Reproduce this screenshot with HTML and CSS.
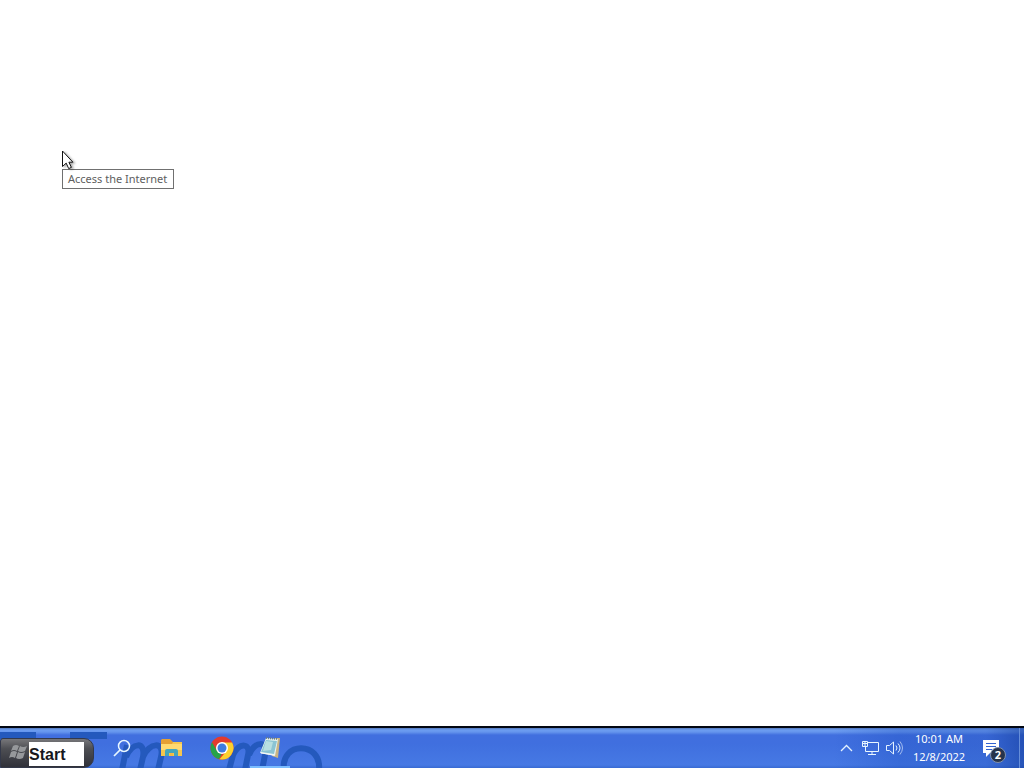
FILE: index.html
```
<!DOCTYPE html>
<html lang="en">
<head>
<meta charset="utf-8">
<meta name="viewport" content="width=device-width, initial-scale=1">
<title>Desktop</title>
<link rel="stylesheet" href="styles.css">
</head>
<body>
<main class="desktop">
  <div class="pointer">
    <svg class="cursor" viewBox="0 0 15 20" aria-hidden="true"><path d="M.5 1v15.500l3.700-3.400 2.500 5.500 2.700-1.200-2.500-5.200h4z" fill="#fff" stroke="#111" stroke-width="1"/></svg>
    <div class="tooltip" role="tooltip">Access the Internet</div>
  </div>
</main>
<footer class="taskbar">
  <svg class="art" viewBox="0 0 340 40" aria-hidden="true">
    <path d="M0 4h36v7H0zM70 4h37v7H70z" fill="#2459bd"/>
    <g fill="none" stroke="#2459bd" stroke-width="6">
      <path d="M122 42l5-25M126 29c6-15 20-16 17 0l-3 13M143 29c6-15 22-16 18 0l-3 13"/>
      <path d="M229 42l4-15c7-14 18-11 15 0l-3 15M249 27c5-14 19-15 16 0l-3 15"/>
      <path d="M284 42c-4-29 38-29 35 0"/>
    </g>
  </svg>
  <nav class="apps" aria-label="Applications">
    <button class="start" type="button">
      <svg class="flag" viewBox="0 0 20 18" aria-hidden="true"><path d="M4 3q3-2 6 0L8 8Q5 6 2 8zM11 3q3 2 7 0l-2 5q-4 2-7 0zM2 9q3-2 6 0l-2 6q-3-2-6 0zM9 9q3 2 7 0l-2 6q-4 2-7 0z" fill="#96989b"/></svg>
      <span class="start-label">Start</span>
    </button>
    <button class="app" type="button" aria-label="Search">
      <svg viewBox="0 0 24 24" aria-hidden="true"><circle cx="14" cy="10" r="5.500" fill="none" stroke="#e8f7ff" stroke-width="1.500"/><path d="M10 14l-6 6" stroke="#e8f7ff" stroke-width="1.700"/></svg>
    </button>
    <button class="app" type="button" aria-label="File Explorer">
      <svg viewBox="0 0 24 24" aria-hidden="true"><path d="M1 4h8l2 2h11v14H1z" fill="#f5c64f"/><path d="M2 3h8l3 3-1 2H1V4z" fill="#e5a034"/><path d="M1 8h21v6H1z" fill="#ffda70"/><path d="M5 20v-5q0-2 2-2h9q2 0 2 2v5h-4v-3H9v3z" fill="#44a6bd"/><path d="M10 17h3v3h-3z" fill="#f5b942"/></svg>
    </button>
    <button class="app" type="button" aria-label="Chrome">
      <svg viewBox="0 0 24 24" aria-hidden="true"><circle cx="12" cy="12" r="11.500" fill="#e33b2e"/><path d="M2 6.300l5 8.700 5 2.500-3 5.600A11.500 11.500 0 0 1 2 6.300z" fill="#26a34a"/><path d="M12 6.500h10.100A11.500 11.500 0 0 1 9.500 23.200L17 14.500z" fill="#fbd02e"/><circle cx="12" cy="12" r="6" fill="#fff"/><circle cx="12" cy="12" r="4.500" fill="#3e7ce0"/></svg>
    </button>
    <button class="app active" type="button" aria-label="Notepad">
      <svg viewBox="0 0 24 24" aria-hidden="true"><path d="M17 2h5l-2 20-6-2z" fill="#c9b583"/><path d="M8 2l12 1-3 17-15-3z" fill="#e9f4ef"/><path d="M8 4l11 1-3 13-13-2z" fill="#8bc4d3"/><path d="M8 5l7 1-2 8-8 1z" fill="#b8dfe1"/><path d="M8 2l12 1" stroke="#71817f" stroke-width="2" stroke-dasharray="1 1"/><path d="M3 17l13 2" stroke="#f5faf8"/></svg>
    </button>
  </nav>
  <section class="tray" aria-label="System tray">
    <button class="tray-button" type="button" aria-label="Show hidden icons"><svg viewBox="0 0 18 18" aria-hidden="true"><path d="M4 12l5.500-5.500L15 12" fill="none" stroke="#e4f2ff" stroke-width="1.300"/></svg></button>
    <button class="tray-button" type="button" aria-label="Network"><svg viewBox="0 0 18 18" aria-hidden="true"><path d="M7 3.500h10.500v9h-13V8M11 13v3M7 15.500h8M1.500 2.500h5v5h-5zM4 3v4M1.500 4.500h5" fill="none" stroke="#e8f6ff"/></svg></button>
    <button class="tray-button" type="button" aria-label="Volume"><svg viewBox="0 0 18 18" aria-hidden="true"><path d="M1.500 6.500h3l4-3.500v12l-4-3.500h-3zM11 6.500q2 2.500 0 5M13 4.500q4 4.500 0 9" fill="none" stroke="#e4f2ff"/><path d="M15 2.500q5 6.500 0 13" fill="none" stroke="#a5bdf0"/></svg></button>
    <button class="clock" type="button"><span>10:01 AM</span><span>12/8/2022</span></button>
    <button class="notifications" type="button" aria-label="2 notifications">
      <svg viewBox="0 0 18 18" aria-hidden="true"><path d="M1 1h16v13H8l-4 4v-4H1z" fill="#fff"/><path d="M4 4.500h10M4 7.500h10M4 10.500h6" stroke="#3364d1"/></svg>
      <span class="badge">2</span>
    </button>
  </section>
</footer>
</body>
</html>
```
FILE: styles.css
```
* { box-sizing: border-box; }
body {
  margin: 0;
  min-height: 100vh;
  display: flex;
  flex-direction: column;
  background: #fff;
  font-family: "Noto Sans", "Open Sans", sans-serif;
}
button { border: 0; padding: 0; background: none; font: inherit; color: inherit; }
svg { display: block; }
.desktop { flex: 1; position: relative; }
.pointer { position: absolute; left: 62px; top: 150px; }
.cursor { position: absolute; left: 0; top: 0; width: 15px; height: 20px; filter: drop-shadow(2px 1px 1px #0005); }
.tooltip {
  margin-top: 19px;
  padding: 0 6px 0 5px;
  border: 1px solid #707070;
  background: #fff;
  color: #606060;
  font: 11px/18px "Noto Sans", sans-serif;
  white-space: nowrap;
}
.taskbar {
  position: relative;
  height: 42px;
  display: flex;
  justify-content: space-between;
  border-top: 2px solid #020712;
  background: linear-gradient(#5479bd 0, #6d9df0 2px, #6595ed 4px, #416fdf 7px, #406fdf 16px, #4679e4 37px, #386ad2 40px);
  color: #fff;
  overflow: hidden;
}
.art { position: absolute; left: 0; bottom: 0; width: 340px; height: 40px; }
.apps { position: relative; display: flex; }
.start {
  align-self: flex-end;
  display: flex;
  align-items: flex-end;
  width: 94px;
  height: 30px;
  margin-right: 3px;
  padding: 0 0 1px 8px;
  border: 1px solid #34394a;
  border-radius: 3px 10px 10px 0;
  background: linear-gradient(#77777a, #4d4e53 35%, #303139);
}
.flag { width: 20px; height: 24px; padding-bottom: 4px; }
.start-label {
  width: 55px;
  height: 24px;
  background: #fff;
  color: #17171c;
  font: bold 16px/26px "Liberation Sans", sans-serif;
  text-align: left;
}
.app { width: 50px; display: flex; align-items: flex-start; justify-content: center; padding-top: 8px; }
.app svg { width: 24px; height: 24px; }
.active { width: 40px; margin-left: 3px; border-bottom: 2px solid #7bbdff; }
.tray {
  position: relative;
  display: flex;
  align-items: center;
  padding-right: 4px;
  background: linear-gradient(90deg, transparent, #1e50c055 35%, #2453bd55 80%, #123c9b99);
}
.tray::after { content: ""; align-self: stretch; width: 1px; background: #668ed9; }
.tray-button { width: 24px; height: 40px; display: flex; align-items: center; justify-content: center; }
.tray-button svg { width: 18px; height: 18px; }
.clock { width: 66px; display: flex; flex-direction: column; align-items: center; font: 11px/18px "Noto Sans", sans-serif; }
.notifications { position: relative; display: flex; align-items: flex-start; width: 47px; height: 40px; padding: 11px 0 0 10px; }
.notifications svg { width: 18px; height: 18px; }
.badge {
  position: absolute;
  left: 18px;
  top: 19px;
  width: 16px;
  height: 16px;
  border: 1px solid #8291ab;
  border-radius: 50%;
  background: #26334b;
  font: bold 11px/14px "Open Sans", sans-serif;
  text-align: center;
}
```
